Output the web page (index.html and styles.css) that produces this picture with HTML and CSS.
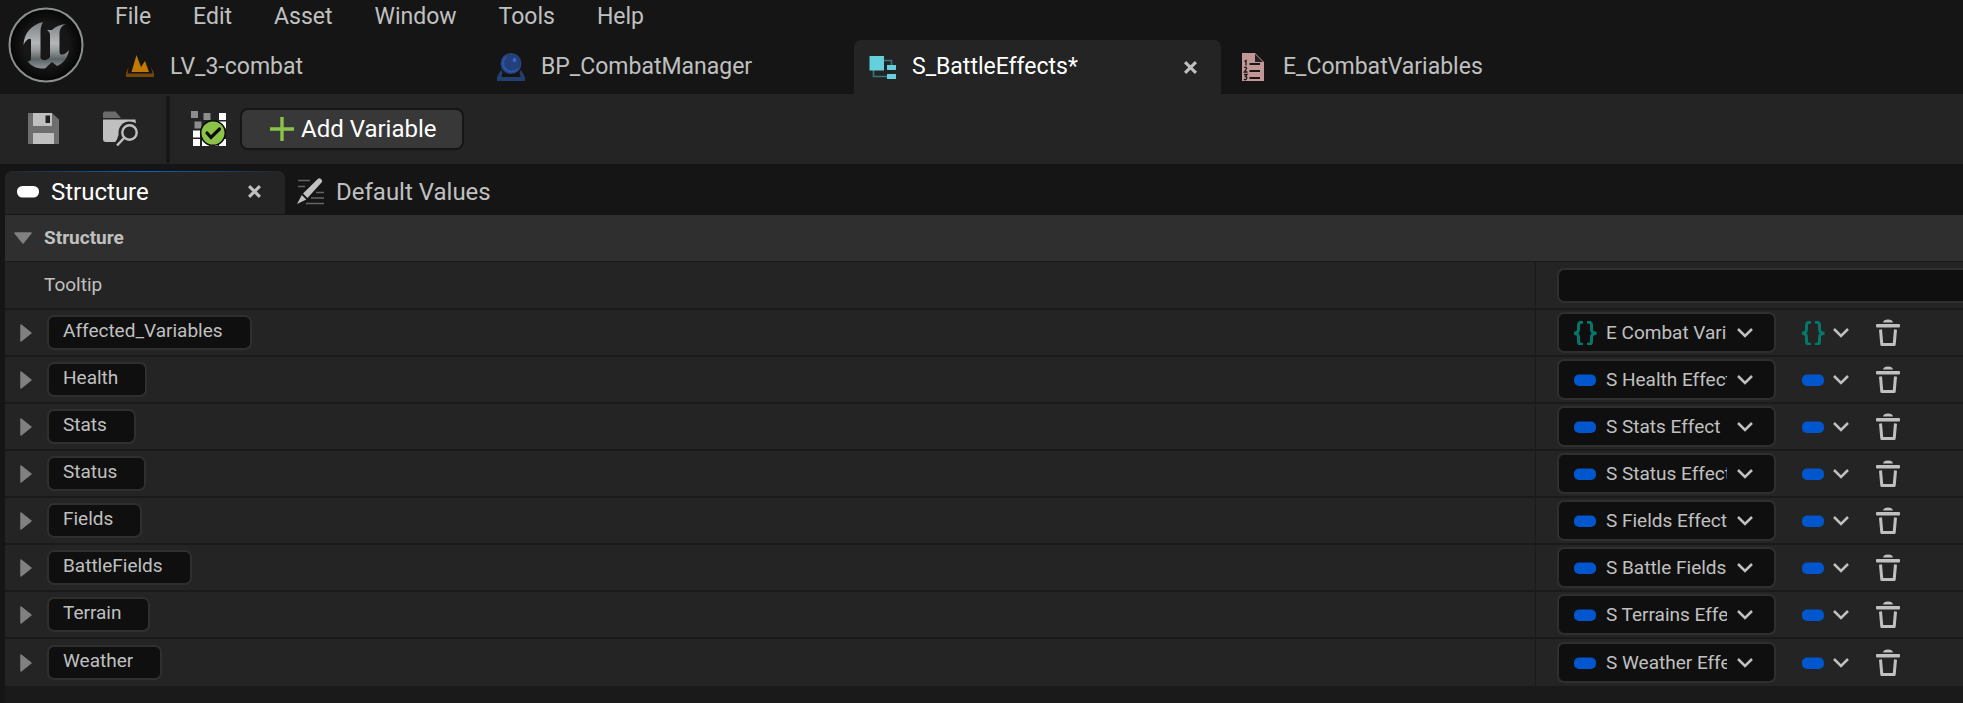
FILE: index.html
```html
<!DOCTYPE html>
<html lang="en">
<head>
<meta charset="utf-8">
<title>S_BattleEffects</title>
<link rel="stylesheet" href="styles.css">
</head>
<body>
<svg class="defs" aria-hidden="true">
  <symbol id="i-chevron" viewBox="0 0 16 10"><path d="M1 1l7 7 7-7" fill="none" stroke="#c0c0c0" stroke-width="2.500"/></symbol>
  <symbol id="i-pill" viewBox="0 0 24 24"><rect x="1" y="6.500" width="22" height="11.500" rx="5" fill="#0057cd"/></symbol>
  <symbol id="i-braces" viewBox="0 0 24 24"><path d="M10 1.200H8.500Q5.500 1.200 5.500 4V8.500Q5.500 12 1 12.200Q5.500 12.500 5.500 16V20.500Q5.500 23.300 8.500 23.300H10M14 1.200H15.500Q18.500 1.200 18.500 4V8.500Q18.500 12 23.500 12.200Q18.500 12.500 18.500 16V20.500Q18.500 23.300 15.500 23.300H14" fill="none" stroke="#04766a" stroke-width="3"/></symbol>
  <symbol id="i-trash" viewBox="0 0 24 28"><path d="M7 3.500Q7.500.5 12 .5T17 3.500Z" fill="#c0c0c0"/><rect y="5" width="24" height="3.500" rx="1" fill="#c0c0c0"/><path d="M4.500 10.500L5.800 25.500H18.200L19.500 10.500" fill="none" stroke="#c0c0c0" stroke-width="3" stroke-linejoin="round"/></symbol>
  <symbol id="i-right" viewBox="0 0 12 18"><path d="M1 1v16L11 9z" fill="#808080" stroke="#808080" stroke-width="1.500" stroke-linejoin="round"/></symbol>
  <symbol id="i-close" viewBox="0 0 12 12"><path d="M1 1l10 10M11 1L1 11" stroke="#c0c0c0" stroke-width="2.800"/></symbol>
</svg>

<header class="top">
  <svg class="logo" viewBox="0 0 76 76" aria-hidden="true">
    <defs>
      <linearGradient id="metal" x1="0" y1="0" x2="0" y2="1"><stop offset="0" stop-color="#7a7f81"/><stop offset=".45" stop-color="#b4b6b7"/><stop offset=".6" stop-color="#999d9f"/><stop offset=".8" stop-color="#5a6265"/><stop offset="1" stop-color="#8f9496"/></linearGradient>
      <radialGradient id="disc"><stop offset=".6" stop-color="#171717"/><stop offset="1" stop-color="#050505"/></radialGradient>
    </defs>
    <circle cx="38" cy="38" r="36.500" fill="url(#disc)" stroke="#8b9091" stroke-width="2"/>
    <path d="M35 15C23 18 16 26 15.500 38C18 33 21 30.500 23 32.500V51C23 54 21 54.500 19.500 54C23 59 29 62 37 61.500L44 55L49 59C56 56 60 50 61 43C57 48 52 49.500 51.500 45V26C51.500 21 55 18 58 17C52 17.500 47 20 44 23L39 23C41 24.500 42 26 42 28V50C39 54 34 54 32.500 51V24C32.500 20 34 17 35 15Z" fill="url(#metal)"/>
  </svg>
  <div class="top-main">
    <nav class="menu" aria-label="Main menu">
      <button type="button">File</button><button type="button">Edit</button><button type="button">Asset</button><button type="button">Window</button><button type="button">Tools</button><button type="button">Help</button>
    </nav>
    <div class="doc-tabs" role="tablist" aria-label="Open assets">
      <div class="doc-tab"><button type="button" role="tab" aria-selected="false">
        <svg class="doc-icon" viewBox="0 0 28 28" aria-hidden="true"><path d="M5.500 19L10.500 2l4.500 12 4-6 4 11z" fill="#c17906"/><path d="M0 24V20l2.500-6-1 6.500h25L25 14l3 6.500V24z" fill="#74470c"/></svg>
        LV_3-combat</button></div>
      <div class="doc-tab"><button type="button" role="tab" aria-selected="false">
        <svg class="doc-icon" viewBox="0 0 28 28" aria-hidden="true"><path d="M0 28v-4l4-7 1.500 2L4.500 24h19L22.500 19l1.500-2 4 7v4z" fill="#223f72"/><circle cx="14" cy="10.500" r="10.500" fill="#2a4479"/><circle cx="14" cy="10.500" r="9" fill="#223d70"/><path d="M10 2.500A9 9 0 1 0 22 15A10 10 0 0 1 10 2.500" fill="#2c57ae"/><circle cx="14.800" cy="10" r="7.800" fill="#24407a"/><circle cx="17.500" cy="7" r="2" fill="#3567cf"/></svg>
        BP_CombatManager</button></div>
      <div class="doc-tab active"><button type="button" role="tab" aria-selected="true">
        <svg class="doc-icon" viewBox="0 0 28 28" aria-hidden="true"><path d="M15 7.500h8.500V13M5.500 17v6.500H19" fill="none" stroke="#34787f" stroke-width="1.600"/><path d="M1.500 3H16v14.500H1.500zM19 12h9v5h-9zM19 21h9v5h-9z" fill="#65cfdb"/></svg>
        S_BattleEffects*</button>
        <button type="button" class="close" aria-label="Close S_BattleEffects"><svg class="x" aria-hidden="true"><use href="#i-close"/></svg></button></div>
      <div class="doc-tab"><button type="button" role="tab" aria-selected="false">
        <svg class="doc-icon" viewBox="0 0 28 28" aria-hidden="true"><path d="M3 0h13l9 9v19H3z" fill="#c19797"/><path d="M16 1v8h8z" fill="#222"/><path d="M10.500 11H21M10.500 18H21M10.500 25H21" stroke="#1b1717" stroke-width="1.800"/><path d="M5.500 8.500l1.500-1v5M5 14.500q3-1 2.500 1L5.300 19H8.500M5 21.500h3l-1.500 2q2 .5 1 2.300T5 26" fill="none" stroke="#1b1717" stroke-width="1.300"/></svg>
        E_CombatVariables</button></div>
    </div>
  </div>
</header>

<div class="toolbar" role="toolbar" aria-label="Asset tools">
  <button type="button" class="tool save" aria-label="Save"><svg viewBox="0 0 36 36" aria-hidden="true"><path d="M2 2h24l7 6.500V33H2z" fill="#6e6e6e"/><path d="M7 2h19v13H7zM7 22h21v11H7z" fill="#c0c0c0"/><path d="M19.500 4.500H24V12h-4.500z" fill="#202020"/></svg></button>
  <button type="button" class="tool browse" aria-label="Browse to asset"><svg viewBox="0 0 36 36" aria-hidden="true"><path d="M0 7V2l1.500-1.500H12.500L18 7z" fill="#6b6b6b"/><path d="M0 8.500h32.500l.5 5H0z" fill="#c0c0c0"/><path d="M0 12h20L13 31H3q-3 0-3-3z" fill="#c0c0c0"/><circle cx="26.500" cy="21.500" r="11" fill="#242424"/><path d="M14 35l8-9" stroke="#242424" stroke-width="8"/><circle cx="26.500" cy="21.500" r="7.200" fill="none" stroke="#c0c0c0" stroke-width="2.400"/><path d="M21.500 26.500l-7.500 8" stroke="#c0c0c0" stroke-width="2.400"/></svg></button>
  <span class="divider"></span>
  <button type="button" class="tool status" aria-label="Compile status"><svg viewBox="0 0 36 36" aria-hidden="true"><path d="M0 0h7v7H0zM12.500 2h7v7h-7zM3.500 10.500h7v7h-7z" fill="#8d8d8d"/><path d="M28 2h7v7h-7zM28 10.500h7v7h-7zM2 19.500h7v7H2zM2 28h7v7H2zM11 28h7v7h-7zM19.500 28h7v7h-7zM28 28h7v7h-7z" fill="#fff"/><circle cx="22" cy="22" r="12.300" fill="#8bc34a" stroke="#0c0c0c" stroke-width="1.600"/><path d="M16 22l4 4.500 8.500-8.500" fill="none" stroke="#0d0d0d" stroke-width="3.200" stroke-linecap="round"/></svg></button>
  <button type="button" class="add"><svg viewBox="0 0 24 24" aria-hidden="true"><path d="M12 0v24M0 12h24" stroke="#8bc34a" stroke-width="3.400"/></svg>Add Variable</button>
</div>

<main class="panel">
  <div class="panel-tabs" role="tablist" aria-label="Panels">
    <div class="panel-tab active"><button type="button" role="tab" aria-selected="true"><svg class="white-pill" viewBox="0 0 22 12" aria-hidden="true"><rect width="22" height="11.500" rx="5.500" fill="#fff"/></svg>Structure</button>
      <button type="button" class="close" aria-label="Close Structure"><svg class="x" aria-hidden="true"><use href="#i-close"/></svg></button></div>
    <div class="panel-tab"><button type="button" role="tab" aria-selected="false"><svg class="edit-icon" viewBox="0 0 27 27" aria-hidden="true"><path d="M1 2.500h12M1 8.500h7M19 14.500h8M14 20h13M9 25.500h18" stroke="#656565" stroke-width="1.500"/><path d="M21 .8q1.500-1.200 3 .2t1 3L10.500 20 6 15.500zM4.800 17l4.500 4.500L0 26z" fill="#c0c0c0"/></svg>Default Values</button></div>
  </div>

  <section class="details" aria-label="Structure">
    <h2 class="category"><button type="button" aria-expanded="true"><svg class="down" viewBox="0 0 18 12" aria-hidden="true"><path d="M1 1h16L9 11z" fill="#808080" stroke="#808080" stroke-width="1.500" stroke-linejoin="round"/></svg>Structure</button></h2>
    <div class="row tip-row"><div class="name"><label for="tooltip">Tooltip</label></div><div class="value"><input id="tooltip" class="box tip" type="text"></div></div>
    <div class="row"><div class="name"><button type="button" class="expand" aria-label="Expand Affected_Variables"><svg aria-hidden="true"><use href="#i-right"/></svg></button><input class="box var" type="text" value="Affected_Variables" size="18" aria-label="Variable name"></div><div class="value"><div class="box combo"><svg class="type" aria-hidden="true"><use href="#i-braces"/></svg><select aria-label="Type of Affected_Variables"><option>E Combat Variables</option></select><svg class="chev" aria-hidden="true"><use href="#i-chevron"/></svg></div><button type="button" class="container" aria-label="Container type"><svg class="type" aria-hidden="true"><use href="#i-braces"/></svg><svg class="chev" aria-hidden="true"><use href="#i-chevron"/></svg></button><button type="button" class="trash" aria-label="Remove Affected_Variables"><svg aria-hidden="true"><use href="#i-trash"/></svg></button></div></div>
    <div class="row"><div class="name"><button type="button" class="expand" aria-label="Expand Health"><svg aria-hidden="true"><use href="#i-right"/></svg></button><input class="box var" type="text" value="Health" size="6" aria-label="Variable name"></div><div class="value"><div class="box combo"><svg class="type" aria-hidden="true"><use href="#i-pill"/></svg><select aria-label="Type of Health"><option>S Health Effect</option></select><svg class="chev" aria-hidden="true"><use href="#i-chevron"/></svg></div><button type="button" class="container" aria-label="Container type"><svg class="type" aria-hidden="true"><use href="#i-pill"/></svg><svg class="chev" aria-hidden="true"><use href="#i-chevron"/></svg></button><button type="button" class="trash" aria-label="Remove Health"><svg aria-hidden="true"><use href="#i-trash"/></svg></button></div></div>
    <div class="row"><div class="name"><button type="button" class="expand" aria-label="Expand Stats"><svg aria-hidden="true"><use href="#i-right"/></svg></button><input class="box var" type="text" value="Stats" size="5" aria-label="Variable name"></div><div class="value"><div class="box combo"><svg class="type" aria-hidden="true"><use href="#i-pill"/></svg><select aria-label="Type of Stats"><option>S Stats Effect</option></select><svg class="chev" aria-hidden="true"><use href="#i-chevron"/></svg></div><button type="button" class="container" aria-label="Container type"><svg class="type" aria-hidden="true"><use href="#i-pill"/></svg><svg class="chev" aria-hidden="true"><use href="#i-chevron"/></svg></button><button type="button" class="trash" aria-label="Remove Stats"><svg aria-hidden="true"><use href="#i-trash"/></svg></button></div></div>
    <div class="row"><div class="name"><button type="button" class="expand" aria-label="Expand Status"><svg aria-hidden="true"><use href="#i-right"/></svg></button><input class="box var" type="text" value="Status" size="6" aria-label="Variable name"></div><div class="value"><div class="box combo"><svg class="type" aria-hidden="true"><use href="#i-pill"/></svg><select aria-label="Type of Status"><option>S Status Effect</option></select><svg class="chev" aria-hidden="true"><use href="#i-chevron"/></svg></div><button type="button" class="container" aria-label="Container type"><svg class="type" aria-hidden="true"><use href="#i-pill"/></svg><svg class="chev" aria-hidden="true"><use href="#i-chevron"/></svg></button><button type="button" class="trash" aria-label="Remove Status"><svg aria-hidden="true"><use href="#i-trash"/></svg></button></div></div>
    <div class="row"><div class="name"><button type="button" class="expand" aria-label="Expand Fields"><svg aria-hidden="true"><use href="#i-right"/></svg></button><input class="box var" type="text" value="Fields" size="6" aria-label="Variable name"></div><div class="value"><div class="box combo"><svg class="type" aria-hidden="true"><use href="#i-pill"/></svg><select aria-label="Type of Fields"><option>S Fields Effect</option></select><svg class="chev" aria-hidden="true"><use href="#i-chevron"/></svg></div><button type="button" class="container" aria-label="Container type"><svg class="type" aria-hidden="true"><use href="#i-pill"/></svg><svg class="chev" aria-hidden="true"><use href="#i-chevron"/></svg></button><button type="button" class="trash" aria-label="Remove Fields"><svg aria-hidden="true"><use href="#i-trash"/></svg></button></div></div>
    <div class="row"><div class="name"><button type="button" class="expand" aria-label="Expand BattleFields"><svg aria-hidden="true"><use href="#i-right"/></svg></button><input class="box var" type="text" value="BattleFields" size="12" aria-label="Variable name"></div><div class="value"><div class="box combo"><svg class="type" aria-hidden="true"><use href="#i-pill"/></svg><select aria-label="Type of BattleFields"><option>S Battle Fields</option></select><svg class="chev" aria-hidden="true"><use href="#i-chevron"/></svg></div><button type="button" class="container" aria-label="Container type"><svg class="type" aria-hidden="true"><use href="#i-pill"/></svg><svg class="chev" aria-hidden="true"><use href="#i-chevron"/></svg></button><button type="button" class="trash" aria-label="Remove BattleFields"><svg aria-hidden="true"><use href="#i-trash"/></svg></button></div></div>
    <div class="row"><div class="name"><button type="button" class="expand" aria-label="Expand Terrain"><svg aria-hidden="true"><use href="#i-right"/></svg></button><input class="box var" type="text" value="Terrain" size="7" aria-label="Variable name"></div><div class="value"><div class="box combo"><svg class="type" aria-hidden="true"><use href="#i-pill"/></svg><select aria-label="Type of Terrain"><option>S Terrains Effect</option></select><svg class="chev" aria-hidden="true"><use href="#i-chevron"/></svg></div><button type="button" class="container" aria-label="Container type"><svg class="type" aria-hidden="true"><use href="#i-pill"/></svg><svg class="chev" aria-hidden="true"><use href="#i-chevron"/></svg></button><button type="button" class="trash" aria-label="Remove Terrain"><svg aria-hidden="true"><use href="#i-trash"/></svg></button></div></div>
    <div class="row"><div class="name"><button type="button" class="expand" aria-label="Expand Weather"><svg aria-hidden="true"><use href="#i-right"/></svg></button><input class="box var" type="text" value="Weather" size="7" aria-label="Variable name"></div><div class="value"><div class="box combo"><svg class="type" aria-hidden="true"><use href="#i-pill"/></svg><select aria-label="Type of Weather"><option>S Weather Effect</option></select><svg class="chev" aria-hidden="true"><use href="#i-chevron"/></svg></div><button type="button" class="container" aria-label="Container type"><svg class="type" aria-hidden="true"><use href="#i-pill"/></svg><svg class="chev" aria-hidden="true"><use href="#i-chevron"/></svg></button><button type="button" class="trash" aria-label="Remove Weather"><svg aria-hidden="true"><use href="#i-trash"/></svg></button></div></div>
  </section>
</main>
</body>
</html>
```
FILE: styles.css
```css
* { box-sizing: border-box; }

body {
  margin: 0;
  min-height: 100vh;
  display: flex;
  flex-direction: column;
  overflow: hidden;
  background: #151515;
  color: #c0c0c0;
  font: 19px/24px Roboto, "Liberation Sans", sans-serif;
}

.defs { display: none; }
svg { display: block; flex: none; }

button, input, select { font: inherit; color: inherit; }

button {
  display: flex;
  align-items: center;
  margin: 0;
  padding: 0;
  border: 0;
  background: none;
  white-space: nowrap;
}

.menu, .doc-tabs { font-size: 23px; line-height: 28px; }
.toolbar, .panel-tabs { font-size: 24px; line-height: 28px; }

/* Header */
.top { display: flex; }
.logo { width: 76px; height: 76px; margin: 7px 0 0 8px; }
.top-main { flex: 1; min-width: 0; margin-left: 28px; }
.menu { display: flex; gap: 42px; height: 40px; padding: 3px 0 9px 3px; }
.doc-tabs { display: flex; gap: 4px; }
.doc-tab {
  display: flex;
  align-items: center;
  justify-content: space-between;
  width: 367px;
  height: 54px;
  padding: 0 24px 0 14px;
  border-radius: 7px 7px 0 0;
}
.doc-tab button:first-child { gap: 16px; }
.doc-icon { width: 28px; height: 28px; }
.doc-tab.active { background: #242424; color: #fff; }
.x { width: 13px; height: 13px; }

/* Toolbar */
.toolbar {
  display: flex;
  align-items: center;
  height: 70px;
  padding-left: 26px;
  background: #242424;
}
.tool svg { width: 36px; height: 36px; }
.browse { margin-left: 41px; }
.divider { width: 4px; height: 67px; margin: 0 21px 0 27px; background: #181818; }
.add {
  gap: 7px;
  height: 42px;
  margin-left: 13px;
  padding: 0 25px 0 28px;
  border: 2px solid #161616;
  border-radius: 8px;
  background: #383838;
  color: #fff;
}
.add svg { width: 24px; height: 24px; }

/* Panel */
.panel { flex: 1; display: flex; flex-direction: column; padding: 7px 0 0 5px; }
.panel-tabs { display: flex; height: 43px; }
.panel-tab { display: flex; align-items: center; padding: 0 12px 2px; }
.panel-tab.active {
  justify-content: space-between;
  width: 280px;
  padding-right: 24px;
  border-radius: 7px 7px 0 0;
  background: linear-gradient(90deg, #242424, #0f64bd 50%, #242424) top / 100% 1px no-repeat #242424;
  color: #fff;
}
.panel-tab button { gap: 12px; }
.white-pill { width: 22px; height: 12px; }
.edit-icon { width: 27px; height: 27px; }

.details { flex: 1; margin-top: 1px; background: #1a1a1a; }
.category {
  display: flex;
  height: 47px;
  margin: 0;
  padding-left: 9px;
  border-bottom: 1px solid #1a1a1a;
  background: #2f2f2f;
  font-size: 19px;
  font-weight: 700;
}
.category button { gap: 12px; }
.down { width: 18px; height: 12px; }

.row {
  display: grid;
  grid-template-columns: 1fr 428px;
  height: 47px;
  border-bottom: 2px solid #1a1a1a;
  background: #242424;
}
.row:last-child { border-bottom: 0; }
.name, .value { display: flex; align-items: center; min-width: 0; }
.name { padding-left: 15px; }
.tip-row { height: 48px; }
.tip-row .name { padding-left: 39px; }
.value { padding-left: 21px; border-left: 1px solid #1a1a1a; }

.box {
  border: 2px solid #2f2f2f;
  border-radius: 7px;
  background: #0f0f0f;
}
.tip { flex: 1; min-width: 0; height: 35px; border-right: 0; border-radius: 7px 0 0 7px; }
.expand { width: 12px; margin-right: 15px; }
.expand svg { width: 12px; height: 18px; }
.var { field-sizing: content; height: 35px; padding: 0 27px 5px 14px; }

.combo { display: flex; align-items: center; width: 219px; height: 41px; padding-left: 14px; }
.combo select {
  width: 121px;
  margin: 0 10px 0 9px;
  padding: 0;
  border: 0;
  background: none;
  appearance: none;
  overflow: hidden;
  text-overflow: clip;
  white-space: nowrap;
}
.type { width: 24px; height: 24px; }
.chev { width: 16px; height: 10px; }
.container { gap: 8px; margin-left: 25px; }
.trash { margin-left: 27px; }
.trash svg { width: 24px; height: 28px; }
```
